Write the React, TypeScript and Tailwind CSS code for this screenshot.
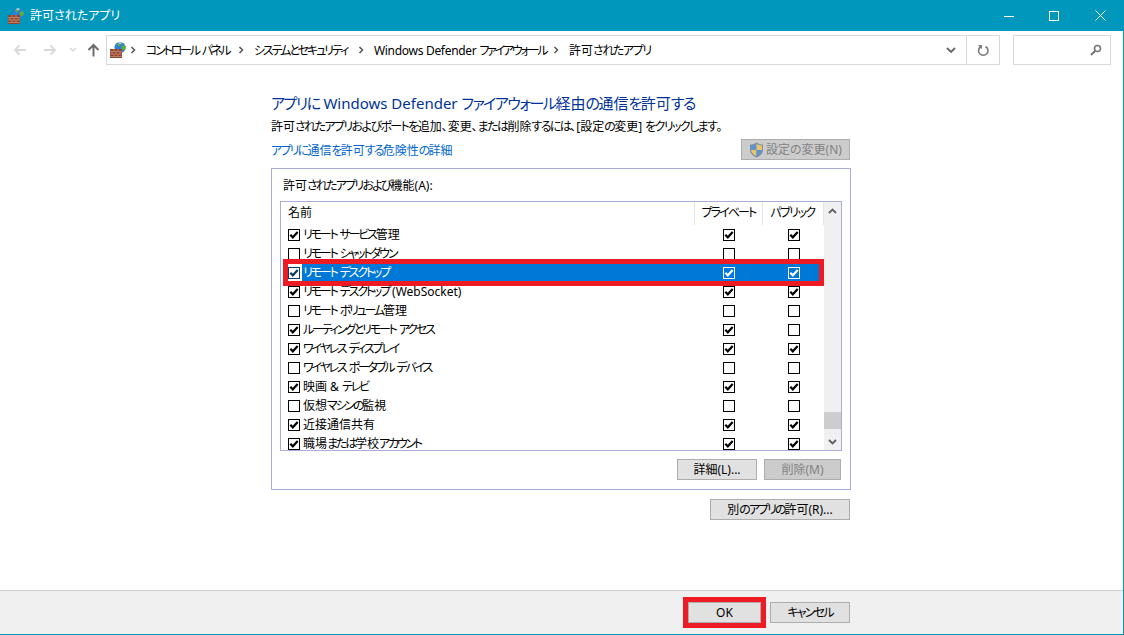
const rows = [
  { name: 'リモート サービス管理', on: true, priv: true, pub: true },
  { name: 'リモート シャットダウン', on: false, priv: false, pub: false },
  { name: 'リモート デスクトップ', on: true, priv: true, pub: true, selected: true },
  { name: 'リモート デスクトップ (WebSocket)', on: true, priv: true, pub: true },
  { name: 'リモート ボリューム管理', on: false, priv: false, pub: false },
  { name: 'ルーティングとリモート アクセス', on: true, priv: true, pub: false },
  { name: 'ワイヤレス ディスプレイ', on: true, priv: true, pub: true },
  { name: 'ワイヤレス ポータブル デバイス', on: false, priv: false, pub: false },
  { name: '映画 & テレビ', on: true, priv: true, pub: true },
  { name: '仮想マシンの監視', on: false, priv: false, pub: false },
  { name: '近接通信共有', on: true, priv: true, pub: true },
  { name: '職場または学校アカウント', on: true, priv: true, pub: true },
];

const crumbs = [
  { label: 'コントロール パネル', width: 'w-[91px]', kana: 'tracking-[-2.2px]' },
  { label: 'システムとセキュリティ', width: 'w-[103px]', kana: 'tracking-[-2.1px]' },
  { label: 'Windows Defender ファイアウォール', width: 'w-[178px] tracking-[-0.3px]', kana: 'tracking-[-2.2px]' },
  { label: '許可されたアプリ', width: 'w-[90px]', kana: 'tracking-[-1.4px]' },
];

// Kana in the original UI font is much narrower than its kanji, so squeeze only the kana runs
function Jp({ text, kana = 'tracking-[-2.2px]' }: { text: string; kana?: string }) {
  return (
    <>
      {text.split(/([\u3040-\u30ff]+)/).map((part, i) =>
        i % 2 === 1 ? (
          <span key={i} className={kana}>
            {part}
          </span>
        ) : (
          part
        ),
      )}
    </>
  );
}

function FirewallIcon() {
  return (
    <svg width="16" height="16" viewBox="0 0 16 16" className="shrink-0">
      <circle cx="10" cy="5.500" r="5.500" fill="#2f7fd6" />
      <path d="M7 2.500c1-1.500 3-2 4-1.500l-.5 2-2 1.500zM11.500 4l3.500-1c.8 1 1 3 .5 4.500l-3.500.5z" fill="#5fae3c" />
      <path d="M8 1c1-.5 3-.7 4 0l-2 1z" fill="#d8ecfa" />
      <rect x="0" y="7" width="12" height="9" fill="#8f4630" />
      <path d="M0 9.500h12M0 12h12M0 14.500h12M4 7v2.500M8 7v2.500M2 9.500V12M6 9.500V12M10 9.500V12M4 12v2.500M8 12v2.500" stroke="#c98a70" strokeWidth="0.8" fill="none" />
    </svg>
  );
}

function ShieldIcon() {
  return (
    <svg width="15" height="16" viewBox="0 0 15 16" className="shrink-0">
      <path d="M7.500 0.500 C5.500 2 3 2.500 1 2.500 V8 C1 11.500 4 14 7.500 15.500 C11 14 14 11.500 14 8 V2.500 C12 2.500 9.500 2 7.500 0.500Z" fill="#7c8fa8" />
      <path d="M7.500 1.800V8H2V3.500C4 3.400 6 3 7.500 1.800Z" fill="#5f93cf" />
      <path d="M7.500 1.800V8H13V3.500C11 3.400 9 3 7.500 1.800Z" fill="#e9c46a" />
      <path d="M7.500 8V14.300C5 13.200 2.300 11 2 8Z" fill="#e9c46a" />
      <path d="M7.500 8V14.300C10 13.200 12.700 11 13 8Z" fill="#5f93cf" />
    </svg>
  );
}

function Check({ on, mode = 'plain' }: { on: boolean; mode?: 'plain' | 'light' | 'focus' }) {
  const box =
    mode === 'light'
      ? 'border-white bg-[#0078d7]'
      : mode === 'focus'
        ? 'border-[#0a3d66] bg-white'
        : 'border-black bg-white';
  const tick = mode === 'light' ? '#ffffff' : mode === 'focus' ? '#0a3d66' : '#000000';
  return (
    <span className={`flex h-[12px] w-[12px] shrink-0 items-center justify-center border ${box}`}>
      {on && (
        <svg width="10" height="10" viewBox="0 0 10 10">
          <path d="M1.300 4.800 L3.800 7.300 L8.700 2" stroke={tick} strokeWidth="2.200" fill="none" />
        </svg>
      )}
    </span>
  );
}

function WinButton({ children, disabled, className }: { children: React.ReactNode; disabled?: boolean; className: string }) {
  return (
    <div
      className={`flex items-center justify-center gap-[2px] border text-[12px] leading-none ${
        disabled ? 'border-[#adadad] bg-[#cccccc] text-[#838383]' : 'border-[#adadad] bg-[#e1e1e1] text-black'
      } ${className}`}
    >
      {children}
    </div>
  );
}

function Chevron() {
  return (
    <svg width="8" height="8" viewBox="0 0 8 8" className="shrink-0">
      <path d="M2.500 1 L5.500 4 L2.500 7" stroke="#555" strokeWidth="1.500" fill="none" />
    </svg>
  );
}

export default function App() {
  return (
    <div className="flex h-[635px] w-[1124px] flex-col overflow-hidden border-r border-[#0097bc] bg-white text-[12px] text-black [font-family:'Noto_Sans','Noto_Sans_CJK_JP',sans-serif] [font-feature-settings:'palt']">
      {/* title bar */}
      <div className="flex h-[31px] shrink-0 items-center bg-[#0097bc] pl-[8px] text-white">
        <FirewallIcon />
        <span className="ml-[6px] text-[12px]">許可されたアプリ</span>
        <div className="ml-auto flex items-center">
          <div className="flex w-[45px] justify-center">
            <svg width="10" height="10" viewBox="0 0 10 10"><path d="M0 5.500H10" stroke="#fff" /></svg>
          </div>
          <div className="flex w-[46px] justify-center">
            <svg width="10" height="10" viewBox="0 0 10 10"><rect x="0.500" y="0.500" width="9" height="9" stroke="#fff" fill="none" /></svg>
          </div>
          <div className="flex w-[46px] justify-center">
            <svg width="11" height="11" viewBox="0 0 11 11"><path d="M0.500 0.500L10.500 10.500M10.500 0.500L0.500 10.500" stroke="#fff" /></svg>
          </div>
        </div>
      </div>

      {/* nav bar */}
      <div className="flex h-[38px] shrink-0 items-center pl-[13px] pr-[12px]">
        <svg width="14" height="12" viewBox="0 0 14 12"><path d="M13 6H2M6.500 1.500L2 6l4.500 4.500" stroke="#d9d9d9" strokeWidth="1.800" fill="none" /></svg>
        <svg width="14" height="12" viewBox="0 0 14 12" className="ml-[16px]"><path d="M1 6h11M7.500 1.500L12 6l-4.500 4.500" stroke="#d9d9d9" strokeWidth="1.800" fill="none" /></svg>
        <svg width="8" height="6" viewBox="0 0 8 6" className="ml-[12px]"><path d="M1 1l3 3 3-3" stroke="#d9d9d9" strokeWidth="1.500" fill="none" /></svg>
        <svg width="13" height="14" viewBox="0 0 13 14" className="ml-[10px]"><path d="M6.500 13.500V2M1.500 7l5-5 5 5" stroke="#6d6d6d" strokeWidth="2" fill="none" /></svg>
        <div className="ml-[6px] flex h-[30px] w-[895px] items-center border border-[#d9d9d9] pl-[3px]">
          <FirewallIcon />
          <div className="ml-[3px] flex items-center">
            {crumbs.map((c) => (
              <div key={c.label} className="flex items-center">
                <Chevron />
                <span className={`ml-[9px] translate-y-[1px] whitespace-nowrap ${c.width}`}>
                  <Jp text={c.label} kana={c.kana} />
                </span>
              </div>
            ))}
          </div>
          <div className="ml-auto flex h-full items-center">
            <svg width="10" height="7" viewBox="0 0 10 7" className="mr-[10px]"><path d="M1 1l4 4 4-4" stroke="#666" strokeWidth="1.800" fill="none" /></svg>
            <div className="flex h-full w-[33px] items-center justify-center border-l border-[#d9d9d9]">
              <svg width="12" height="13" viewBox="0 0 12 13"><path d="M4 2.500a4.700 4.700 0 1 0 4.500 0M3 1v3.500" stroke="#777" strokeWidth="1.500" fill="none" /><path d="M1.500 1.500H4.500V4.500" stroke="#777" strokeWidth="1" fill="none" /></svg>
            </div>
          </div>
        </div>
        <div className="ml-[13px] flex h-[30px] w-[98px] items-center justify-end border border-[#d9d9d9] pr-[8px]">
          <svg width="12" height="12" viewBox="0 0 12 12"><circle cx="7.500" cy="4.500" r="3" stroke="#777" strokeWidth="1.600" fill="none" /><path d="M5.300 6.700L1 11" stroke="#777" strokeWidth="2" /></svg>
        </div>
      </div>

      {/* main content */}
      <div className="flex min-h-0 flex-1 flex-col pl-[271px] pt-[24px]">
        <div className="flex w-[580px] flex-col">
          <h1 className="whitespace-nowrap text-[15px] leading-[20px] text-[#003399]">
            <Jp text="アプリに Windows Defender ファイアウォール経由の通信を許可する" kana="tracking-[-1.5px]" />
          </h1>
          <p className="mt-[6px] whitespace-nowrap leading-[16px]">
            <Jp text="許可されたアプリおよびポートを追加、変更、または削除するには、[設定の変更] をクリックします。" kana="tracking-[-1.6px]" />
          </p>
          <div className="mt-[4px] flex items-end justify-between">
            <span className="pb-[1px] leading-[16px] text-[#0066cc]"><Jp text="アプリに通信を許可する危険性の詳細" kana="tracking-[-1.8px]" /></span>
            <WinButton disabled className="mr-[1px] h-[21px] w-[109px]">
              <ShieldIcon />
              <span className="whitespace-nowrap">設定の変更(N)</span>
            </WinButton>
          </div>

          {/* group box */}
          <div className="mt-[8px] flex h-[322px] flex-col border border-[#acacdc] px-[8px] pt-[9px]">
            <div className="pl-[3px] leading-[16px]"><Jp text="許可されたアプリおよび機能(A):" kana="tracking-[-1.8px]" /></div>
            <div className="mt-[7px] flex h-[250px] flex-col border border-[#acacdc]">
              <div className="flex min-h-0 flex-1">
                <div className="flex min-w-0 flex-1 flex-col overflow-hidden">
                  <div className="flex h-[23px] shrink-0">
                    <div className="flex-1 pl-[7px] leading-[22px]">名前</div>
                    <div className="w-[69px] border-l border-r border-[#e5e5e5] text-center leading-[22px]"><Jp text="プライベート" kana="tracking-[-1.9px]" /></div>
                    <div className="w-[61px] border-r border-[#e5e5e5] pr-[1px] text-center leading-[22px]"><Jp text="パブリック" kana="tracking-[-1.5px]" /></div>
                  </div>
                  {rows.map((r) => (
                    <div key={r.name} className="relative flex h-[19px] shrink-0 items-center">
                      <div className="flex h-full w-[21px] shrink-0 items-center pl-[7px]">
                        <Check on={r.on} mode={r.selected ? 'focus' : 'plain'} />
                      </div>
                      <div className={`flex h-full flex-1 items-center ${r.selected ? 'bg-[#0078d7] text-white' : ''}`}>
                        <span className="flex-1 whitespace-nowrap pl-[1px]"><Jp text={r.name} /></span>
                        <div className="flex w-[69px] justify-center">
                          <Check on={r.priv} mode={r.selected ? 'light' : 'plain'} />
                        </div>
                        <div className="flex w-[61px] justify-center pl-[1px]">
                          <Check on={r.pub} mode={r.selected ? 'light' : 'plain'} />
                        </div>
                      </div>
                      {r.selected && (
                        <div className="absolute -bottom-[4px] -top-[4px] left-[2px] right-0 border-[5px] border-[#ed1c24]" />
                      )}
                    </div>
                  ))}
                </div>
                {/* scrollbar */}
                <div className="flex w-[17px] shrink-0 flex-col justify-between bg-[#f0f0f0]">
                  <div className="flex h-[17px] items-center justify-center">
                    <svg width="9" height="6" viewBox="0 0 9 6"><path d="M1 5l3.500-3.500L8 5" stroke="#606060" strokeWidth="1.800" fill="none" /></svg>
                  </div>
                  <div className="flex flex-col">
                    <div className="mb-[4px] h-[17px] bg-[#cdcdcd]" />
                    <div className="flex h-[17px] items-center justify-center">
                      <svg width="9" height="6" viewBox="0 0 9 6"><path d="M1 1l3.500 3.500L8 1" stroke="#606060" strokeWidth="1.800" fill="none" /></svg>
                    </div>
                  </div>
                </div>
              </div>
            </div>
            <div className="mt-[8px] flex justify-end gap-[7px] pr-[1px]">
              <WinButton className="h-[21px] w-[80px]">詳細(L)...</WinButton>
              <WinButton disabled className="h-[21px] w-[77px]">削除(M)</WinButton>
            </div>
          </div>

          <div className="mt-[9px] flex justify-end pr-[1px]">
            <WinButton className="h-[21px] w-[140px]"><span className="whitespace-nowrap"><Jp text="別のアプリの許可(R)..." kana="tracking-[-2px]" /></span></WinButton>
          </div>
        </div>
      </div>

      {/* footer */}
      <div className="flex h-[44px] shrink-0 items-center justify-end gap-[9px] border-t border-[#cfcfcf] bg-[#f0f0f0] pr-[273px]">
        <div className="relative">
          <WinButton className="h-[21px] w-[73px]">OK</WinButton>
          <div className="absolute -inset-[5px] border-[5px] border-[#ed1c24]" />
        </div>
        <WinButton className="h-[21px] w-[80px]"><span className="whitespace-nowrap"><Jp text="キャンセル" kana="tracking-[-1.8px]" /></span></WinButton>
      </div>
      <div className="h-[1px] shrink-0 bg-[#0097bc]" />
    </div>
  );
}
